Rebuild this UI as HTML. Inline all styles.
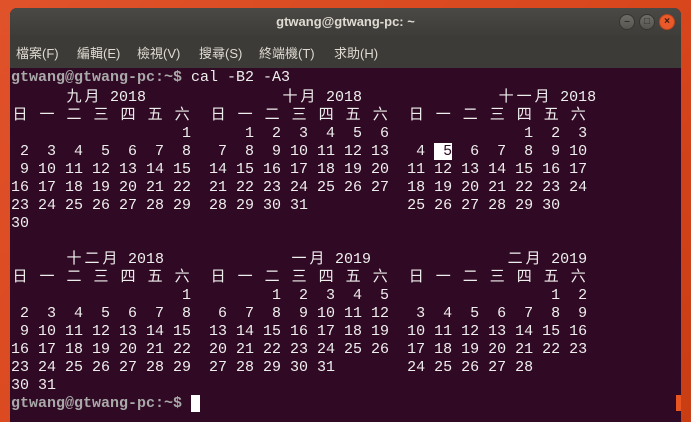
<!DOCTYPE html>
<html><head><meta charset="utf-8"><style>
html,body{margin:0;padding:0;width:691px;height:422px;overflow:hidden;background:linear-gradient(135deg,#e0522a,#d8461c 60%,#c93d14);}
.win{position:absolute;left:10px;top:8px;width:671px;height:414px;background:#300a24;border-radius:7px 7px 0 0;overflow:hidden;}
.title{position:absolute;left:0;top:0;width:671px;height:28px;background:linear-gradient(#4a4945,#3d3c38);color:#dfdbd2;font:bold 13px "Liberation Sans",sans-serif;text-align:center;line-height:28px;}
.menu{position:absolute;left:0;top:28px;width:671px;height:32px;background:#3c3b37;color:#dfdbd2;font:13px "Liberation Sans","Noto Sans CJK TC",sans-serif;}
.menu span{position:absolute;top:7px;}
.btn{position:absolute;top:6px;width:16px;height:16px;border-radius:50%;background:linear-gradient(#6e6d68,#56554f);border:1px solid #35342f;box-sizing:border-box;color:#2e2d29;font:bold 10px "Liberation Sans",sans-serif;text-align:center;line-height:14px;}
.term{position:absolute;left:1px;top:61px;margin:0;font:15px/18px "Liberation Mono","Noto Sans CJK TC",monospace;color:#eeeeec;}
.l{height:18px;white-space:pre;}
.c{display:inline-block;width:18px;text-align:center;}
.p{color:#a9a9a9;font-weight:bold;}
.inv{background:#fff;color:#300a24;}
</style></head><body>
<div class="win">
<div class="title">gtwang@gtwang-pc: ~</div>
<div class="btn" style="left:609px;">–</div>
<div class="btn" style="left:629px;">□</div>
<div class="btn" style="left:649px;background:#e9592a;border-color:#b8441c;color:#3a1a0c;">×</div>
<div class="menu">
<span style="left:6px">檔案(F)</span><span style="left:67px">編輯(E)</span><span style="left:127px">檢視(V)</span><span style="left:189px">搜尋(S)</span><span style="left:249px">終端機(T)</span><span style="left:324px">求助(H)</span>
</div>
<div class="term"><div class="l"><span class="p">gtwang@gtwang-pc:~$</span> cal -B2 -A3</div><div class="l" style="margin-top:2px">      <span class="c">九</span><span class="c">月</span> 2018               <span class="c">十</span><span class="c">月</span> 2018               <span class="c">十</span><span class="c">一</span><span class="c">月</span> 2018</div><div class="l"><span class="c">日</span> <span class="c">一</span> <span class="c">二</span> <span class="c">三</span> <span class="c">四</span> <span class="c">五</span> <span class="c">六</span>  <span class="c">日</span> <span class="c">一</span> <span class="c">二</span> <span class="c">三</span> <span class="c">四</span> <span class="c">五</span> <span class="c">六</span>  <span class="c">日</span> <span class="c">一</span> <span class="c">二</span> <span class="c">三</span> <span class="c">四</span> <span class="c">五</span> <span class="c">六</span></div><div class="l">                   1      1  2  3  4  5  6               1  2  3</div><div class="l"> 2  3  4  5  6  7  8   7  8  9 10 11 12 13   4 <span class="inv"> 5</span>  6  7  8  9 10</div><div class="l"> 9 10 11 12 13 14 15  14 15 16 17 18 19 20  11 12 13 14 15 16 17</div><div class="l">16 17 18 19 20 21 22  21 22 23 24 25 26 27  18 19 20 21 22 23 24</div><div class="l">23 24 25 26 27 28 29  28 29 30 31           25 26 27 28 29 30</div><div class="l">30</div><div class="l"> </div><div class="l">      <span class="c">十</span><span class="c">二</span><span class="c">月</span> 2018              <span class="c">一</span><span class="c">月</span> 2019               <span class="c">二</span><span class="c">月</span> 2019</div><div class="l"><span class="c">日</span> <span class="c">一</span> <span class="c">二</span> <span class="c">三</span> <span class="c">四</span> <span class="c">五</span> <span class="c">六</span>  <span class="c">日</span> <span class="c">一</span> <span class="c">二</span> <span class="c">三</span> <span class="c">四</span> <span class="c">五</span> <span class="c">六</span>  <span class="c">日</span> <span class="c">一</span> <span class="c">二</span> <span class="c">三</span> <span class="c">四</span> <span class="c">五</span> <span class="c">六</span></div><div class="l">                   1         1  2  3  4  5                  1  2</div><div class="l"> 2  3  4  5  6  7  8   6  7  8  9 10 11 12   3  4  5  6  7  8  9</div><div class="l"> 9 10 11 12 13 14 15  13 14 15 16 17 18 19  10 11 12 13 14 15 16</div><div class="l">16 17 18 19 20 21 22  20 21 22 23 24 25 26  17 18 19 20 21 22 23</div><div class="l">23 24 25 26 27 28 29  27 28 29 30 31        24 25 26 27 28</div><div class="l">30 31</div><div class="l"><span class="p">gtwang@gtwang-pc:~$</span> <span class="inv"> </span></div></div>
<div style="position:absolute;left:666px;top:387px;width:5px;height:16px;background:#e95420;"></div>
</div>
</body></html>
